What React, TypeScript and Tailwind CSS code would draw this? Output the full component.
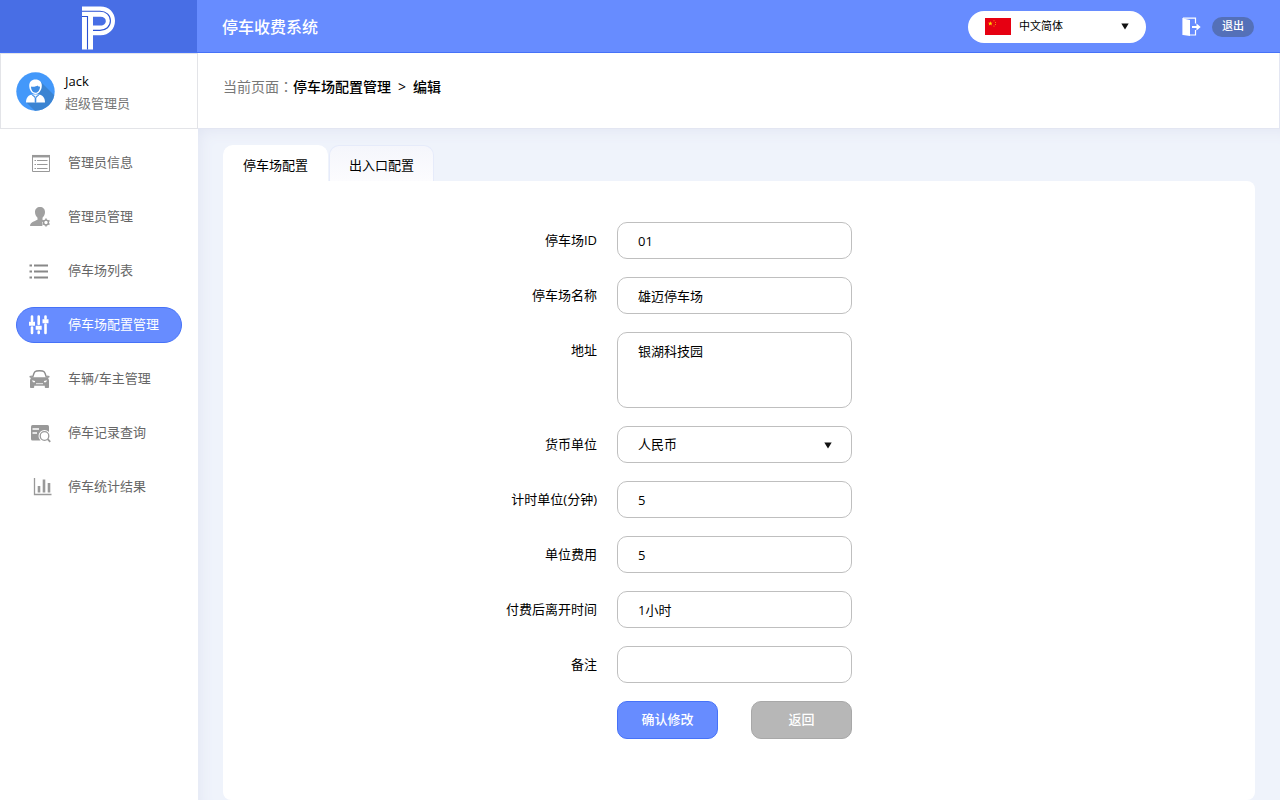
import { useState, type ReactNode } from "react";
import clsx from "clsx";

function Logo() {
  return (
    <svg width="34" height="44" viewBox="0 0 34 44" fill="none" aria-hidden="true">
      <path d="M0 .5H18.500C27 .5 33 6.500 33 14.800S27 29.300 18.500 29.300H11V43.500H0Z" fill="#fff" />
      <path d="M11 10.800H18.500C21.800 10.800 23.800 12.400 23.800 15S21.800 19.500 18.500 19.500H11Z" fill="#486ee5" />
      <path d="M0 5.200H18C24 5.200 28.400 9 28.400 14.800S24 24.400 18 24.400H11" stroke="#2b52d3" strokeWidth="1.100" />
      <path d="M0 10.500H5.500V43.500" stroke="#2b52d3" strokeWidth="1.100" />
    </svg>
  );
}

function Avatar() {
  return (
    <svg width="39" height="39" viewBox="0 0 39 39" className="shrink-0" aria-hidden="true">
      <defs>
        <clipPath id="avatar-clip">
          <circle cx="19.500" cy="19.500" r="19.200" />
        </clipPath>
      </defs>
      <g clipPath="url(#avatar-clip)">
        <rect width="39" height="39" fill="#4398fa" />
        <path d="M25 10L40 25V40H20L10 30L22 22Z" fill="#3b84d2" />
        <path d="M10 30.500c0-4.500 2-7 5.500-8h8c3.500 1 5.500 3.500 5.500 8Z" fill="#fff" />
        <path d="M15.500 22.500l4 3.500 4-3.500-3.500 2v6h-1v-6Z" fill="#3f8de4" stroke="#3f8de4" strokeWidth=".6" />
        <path d="M19.500 7.500c-4 0-6.300 2.500-6.300 6.200 0 3.800 2.500 8.300 6.300 8.300s6.300-4.500 6.300-8.300c0-3.700-2.300-6.200-6.300-6.200Z" fill="#fff" />
        <path d="M15 14.500c2 .8 6-.2 6.500-1 .5.800 1.500 1.200 2.500 1.200 0 3.300-2 6-4.500 6s-4.500-2.700-4.500-6.200Z" fill="#3f8de4" />
      </g>
    </svg>
  );
}

function ChinaFlag() {
  return (
    <svg width="26" height="17" viewBox="0 0 26 17" className="shrink-0" aria-hidden="true">
      <rect width="26" height="17" fill="#e60012" />
      <path d="M5.300 3.200l.6 1.600h1.700L6.300 5.800l.5 1.600-1.500-1-1.500 1 .5-1.600L3 4.800h1.700Z" fill="#ffe100" />
      <circle cx="9" cy="2.800" r=".5" fill="#ffb400" />
      <circle cx="10.500" cy="4.500" r=".5" fill="#ffb400" />
      <circle cx="10.500" cy="6.500" r=".5" fill="#ffb400" />
      <circle cx="9" cy="8" r=".5" fill="#ffb400" />
    </svg>
  );
}

function ExitIcon() {
  return (
    <svg width="19" height="20" viewBox="0 0 19 20" fill="none" aria-hidden="true">
      <path d="M1 1.500L8 3v16L1 18Z" fill="#fff" />
      <path d="M1 1.200h12.500v5.300M13.500 13v5H8M1 1v17" stroke="#fff" strokeWidth="1.200" />
      <path d="M10 9h4.500V6.500L18.700 10l-4.200 3.500V11H10Z" fill="#fff" />
    </svg>
  );
}

function Caret({ className }: { className?: string }) {
  return (
    <svg width="8" height="7" viewBox="0 0 8 7" className={clsx("pointer-events-none", className)} aria-hidden="true">
      <path d="M.3.500h7.400L4 6.500Z" fill="#111" />
    </svg>
  );
}

function InfoIcon() {
  return (
    <svg width="24" height="24" viewBox="0 0 24 24" fill="none" stroke="#999" aria-hidden="true">
      <path d="M4.500 5v15.500h17V5" />
      <path d="M4 5.200h18" strokeWidth="2.500" />
      <path d="M9 9.500h10.500M9 13.500h10.500M9 17.500h10.500M6.500 9.500h1.500M6.500 13.500h1.500M6.500 17.500h1.500" />
    </svg>
  );
}

function AdminIcon() {
  return (
    <svg width="24" height="24" viewBox="0 0 24 24" fill="#a0a0a0" aria-hidden="true">
      <path d="M12 2c-3 0-5 2-5 5 0 2.300 1 4.300 2.500 5.700v2.100C6 16.500 2.500 17 2 21h12.500c-.8-1.500-.5-4 .9-5.300l-.9-.8v-2.200C16 11.300 17 9.300 17 7c0-3-2-5-5-5Z" />
      <circle cx="18" cy="17.500" r="2.400" fill="none" stroke="#999" strokeWidth="1.400" />
      <path d="M18 13.500v1.500M18 20v1.500M14.500 15.500l1.300.8M20.200 18.700l1.300.8M14.500 19.500l1.300-.8M20.200 16.300l1.300-.8" stroke="#999" strokeWidth="1.500" />
    </svg>
  );
}

function ListIcon() {
  return (
    <svg width="24" height="24" viewBox="0 0 24 24" aria-hidden="true">
      <path d="M6 6.500h14M6 12.500h14M6 18.500h14" stroke="#888" strokeWidth="2" />
      <path d="M1.500 6.500h2.500M1.500 12.500h2.500M1.500 18.500h2.500" stroke="#888" strokeWidth="2" />
    </svg>
  );
}

function SlidersIcon() {
  return (
    <svg width="24" height="24" viewBox="0 0 24 24" stroke="#fff" aria-hidden="true">
      <path d="M4 3.500v4.500M4 14.500v5.500M10.700 3.500v7.500M10.700 18.500v1.500M17.500 3.500v2M17.500 11.500v8.500" strokeWidth="2.600" strokeLinecap="round" />
      <path d="M1 10.800h6M7.700 14.800h6M14.500 8.300h6" strokeWidth="4" />
    </svg>
  );
}

function CarIcon() {
  return (
    <svg width="24" height="24" viewBox="0 0 24 24" aria-hidden="true">
      <path d="M4.500 10.500l1.500-4.300C6.400 5 7.200 4.300 8.500 4c2-.4 4-.4 6 0 1.300.3 2.100 1 2.500 2.200l1.500 4.300" fill="none" stroke="#8c8c8c" strokeWidth="1.400" />
      <path d="M1.500 9l2.700-.6-.5 1.800h15.600l-.5-1.800 2.700.6v1.300l-1.500.6c.8.900 1 1.800 1 3V20c0 .6-.3 1-1 1h-2.200c-.6 0-1-.4-1-1v-1.300H6.200V20c0 .6-.4 1-1 1H3c-.6 0-1-.4-1-1v-6.100c0-1.200.2-2.100 1-3l-1.500-.6Z" fill="#999" />
      <path d="M4 13.200l3 .8v1.300H5ZM19 13.200l-3 .8v1.300h2Z" fill="#fff" />
      <path d="M8 16.700h7" stroke="#eee" />
    </svg>
  );
}

function RecordIcon() {
  return (
    <svg width="24" height="24" viewBox="0 0 24 24" fill="none" aria-hidden="true">
      <rect x="3" y="4" width="18" height="15.500" rx="1.500" fill="#999" />
      <path d="M4.500 8h6.500M4.500 12h4.500" stroke="#fff" strokeWidth="1.500" />
      <circle cx="16.500" cy="15" r="6" fill="#fff" />
      <circle cx="16.500" cy="15" r="4.300" stroke="#999" strokeWidth="1.300" />
      <path d="M19.700 18.200l2.500 2.600" stroke="#999" strokeWidth="1.800" />
    </svg>
  );
}

function StatsIcon() {
  return (
    <svg width="24" height="24" viewBox="0 0 24 24" fill="none" stroke="#999" aria-hidden="true">
      <path d="M6.500 3v16.500h17" strokeWidth="1.300" />
      <path d="M11 11v6.500M16 4.500v13M21 8v9.500" strokeWidth="2.600" />
    </svg>
  );
}

const navLinks = [
  { name: "管理员信息", href: "#admin-info", icon: InfoIcon },
  { name: "管理员管理", href: "#admin-manage", icon: AdminIcon },
  { name: "停车场列表", href: "#lots", icon: ListIcon },
  { name: "停车场配置管理", href: "#lot-config", icon: SlidersIcon, active: true },
  { name: "车辆/车主管理", href: "#vehicles", icon: CarIcon },
  { name: "停车记录查询", href: "#records", icon: RecordIcon },
  { name: "停车统计结果", href: "#stats", icon: StatsIcon },
];

const tabs = ["停车场配置", "出入口配置"];

const fieldClass =
  "block w-full rounded-[10px] border border-[#bfbfbf] bg-white px-5 text-[13px] text-black outline-none focus:border-[#678cff]";

function FormRow({ id, label, children }: { id: string; label: string; children: ReactNode }) {
  return (
    <>
      <label htmlFor={id} className="col-start-1 pt-2 text-right text-[13px] leading-5">
        {label}
      </label>
      {children}
    </>
  );
}

export default function App() {
  const [tab, setTab] = useState(tabs[0]);

  return (
    <div className="flex min-h-screen flex-col bg-white font-['Open_Sans','Noto_Sans_CJK_SC',sans-serif] text-black">
      <header className="flex h-[53px] border-b border-[#4672f8] bg-[#678cff]">
        <div className="flex w-[197px] shrink-0 items-center justify-center bg-[#486ee5] pt-1">
          <Logo />
        </div>
        <div className="flex flex-1 items-center pt-px pr-[26px] pl-[25px]">
          <h1 className="text-base font-medium text-white">停车收费系统</h1>
          <div className="relative ml-auto flex h-8 w-[178px] items-center rounded-full bg-white pl-[17px]">
            <ChinaFlag />
            <select aria-label="语言" className="h-8 flex-1 appearance-none rounded-r-full bg-transparent pl-2 text-[11px] outline-none">
              <option>中文简体</option>
            </select>
            <Caret className="absolute right-[17px]" />
          </div>
          <div className="ml-9">
            <ExitIcon />
          </div>
          <button type="button" className="ml-[11px] h-5 w-[42px] rounded-full bg-[#5470b8] text-[11px] font-medium text-white">
            退出
          </button>
        </div>
      </header>

      <div className="flex flex-1">
        <aside className="w-[198px] shrink-0 bg-white">
          <div className="flex h-[76px] items-center gap-[10px] border border-[#e3e4e8] pt-px pl-[15px]">
            <Avatar />
            <div>
              <p className="text-[13px] leading-[22px]">Jack</p>
              <p className="text-[13px] leading-[22px] text-[#777]">超级管理员</p>
            </div>
          </div>
          <nav className="flex flex-col gap-[18px] px-4 pt-4">
            {navLinks.map((link) => {
              const Icon = link.icon;
              return (
                <a
                  key={link.name}
                  href={link.href}
                  className={clsx(
                    "flex h-9 items-center gap-4 rounded-full border pl-[11px] text-[13px] whitespace-nowrap",
                    link.active ? "border-[#4672f8] bg-[#678cff] text-white" : "border-transparent text-[#666]"
                  )}
                >
                  <Icon />
                  <span>{link.name}</span>
                </a>
              );
            })}
          </nav>
        </aside>

        <main className="flex flex-1 flex-col">
          <div className="flex h-[76px] items-center border-r border-b border-[#e3e6f2] bg-white pb-2 pl-[25px] text-sm">
            <span className="text-[#777]">
              当前页面<span className="font-['Noto_Sans_CJK_TC',sans-serif]">：</span>
            </span>
            <span className="flex gap-[7px] font-medium">
              <span>停车场配置管理</span>
              <span>&gt;</span>
              <span>编辑</span>
            </span>
          </div>

          <div className="flex flex-1 flex-col bg-[#eff3fb] px-[25px] pt-4 shadow-[inset_8px_8px_16px_-8px_#dfe3f1]">
            <div role="tablist" className="flex gap-px">
              {tabs.map((name) => (
                <button
                  key={name}
                  type="button"
                  role="tab"
                  aria-selected={tab === name}
                  onClick={() => setTab(name)}
                  className={clsx(
                    "h-9 w-[105px] rounded-t-[10px] border border-b-0 pt-1 text-[13px]",
                    tab === name ? "border-white bg-white" : "border-[#e6ebfa] bg-linear-to-b from-[#f5f6fc] to-[#fcfcfe]"
                  )}
                >
                  {name}
                </button>
              ))}
            </div>

            <section className="flex-1 rounded-lg rounded-tl-none bg-white pt-[41px] pr-[9px]">
              <form className="grid grid-cols-[1fr_235px_1fr] gap-x-5 gap-y-[18px]">
                <FormRow id="lot-id" label="停车场ID">
                  <input id="lot-id" defaultValue="01" className={clsx(fieldClass, "h-[37px]")} />
                </FormRow>
                <FormRow id="lot-name" label="停车场名称">
                  <input id="lot-name" defaultValue="雄迈停车场" className={clsx(fieldClass, "h-[37px]")} />
                </FormRow>
                <FormRow id="address" label="地址">
                  <textarea id="address" defaultValue="银湖科技园" className={clsx(fieldClass, "h-[76px] resize-none py-2 leading-5")} />
                </FormRow>
                <FormRow id="currency" label="货币单位">
                  <div className="relative">
                    <select id="currency" className={clsx(fieldClass, "h-[37px] appearance-none")}>
                      <option>人民币</option>
                    </select>
                    <Caret className="absolute top-4 right-5" />
                  </div>
                </FormRow>
                <FormRow id="time-unit" label="计时单位(分钟)">
                  <input id="time-unit" defaultValue="5" className={clsx(fieldClass, "h-[37px]")} />
                </FormRow>
                <FormRow id="unit-fee" label="单位费用">
                  <input id="unit-fee" defaultValue="5" className={clsx(fieldClass, "h-[37px]")} />
                </FormRow>
                <FormRow id="leave-time" label="付费后离开时间">
                  <input id="leave-time" defaultValue="1小时" className={clsx(fieldClass, "h-[37px]")} />
                </FormRow>
                <FormRow id="remark" label="备注">
                  <input id="remark" className={clsx(fieldClass, "h-[37px]")} />
                </FormRow>
                <div className="col-start-2 flex justify-between">
                  <button type="submit" className="h-[38px] w-[101px] rounded-[10px] border border-[#4672f8] bg-[#678cff] text-[13px] font-medium text-white">
                    确认修改
                  </button>
                  <button type="button" className="h-[38px] w-[101px] rounded-[10px] border border-[#a8a8a8] bg-[#b7b7b7] text-[13px] font-medium text-white">
                    返回
                  </button>
                </div>
              </form>
            </section>
          </div>
        </main>
      </div>
    </div>
  );
}
